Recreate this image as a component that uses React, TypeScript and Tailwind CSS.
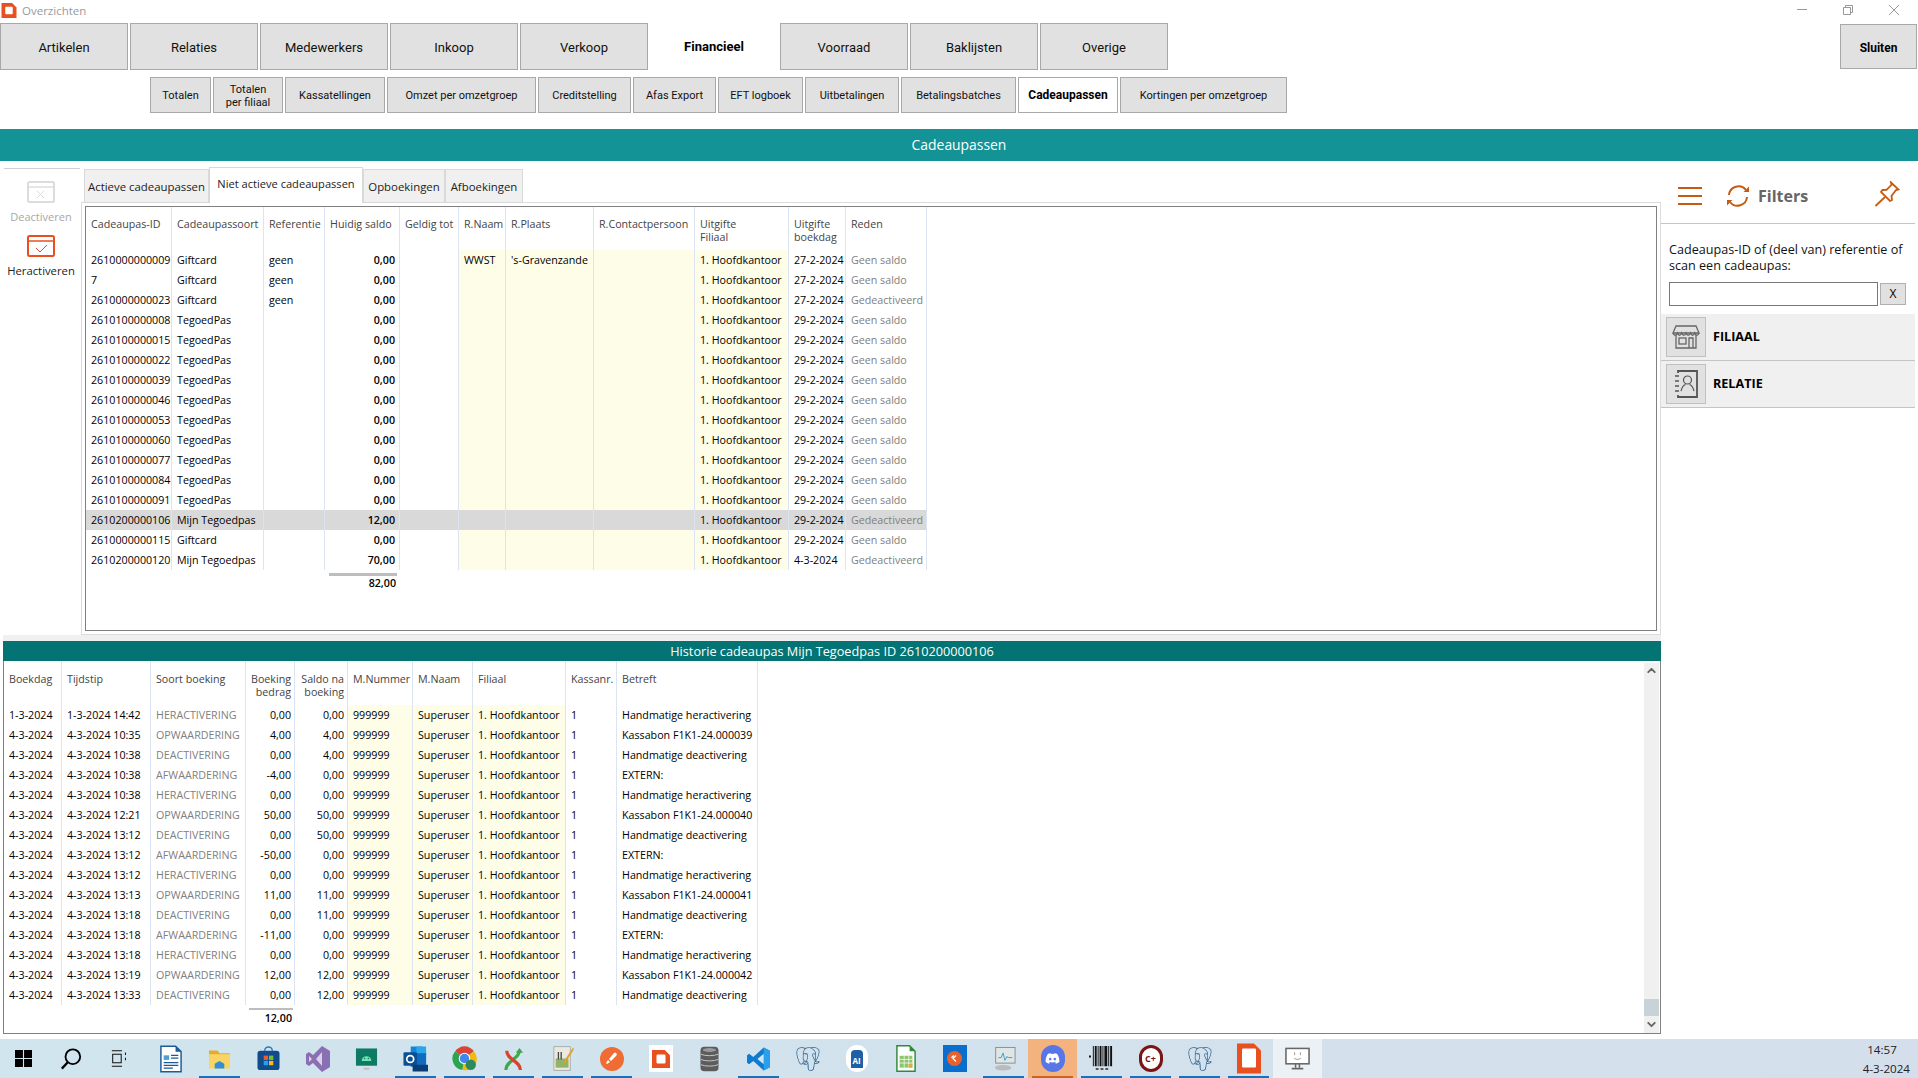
import React from 'react';
import { ChevronDown, ChevronUp } from 'lucide-react';
import { FaDiscord } from 'react-icons/fa';
import { SiPostgresql } from 'react-icons/si';

const mainTabs = ['Artikelen', 'Relaties', 'Medewerkers', 'Inkoop', 'Verkoop', 'Financieel', 'Voorraad', 'Baklijsten', 'Overige'];

const subTabs = [
  { label: 'Totalen', w: 'w-[61px]' },
  { label: 'Totalen per filiaal', w: 'w-[70px]' },
  { label: 'Kassatellingen', w: 'w-[100px]' },
  { label: 'Omzet per omzetgroep', w: 'w-[149px]' },
  { label: 'Creditstelling', w: 'w-[93px]' },
  { label: 'Afas Export', w: 'w-[83px]' },
  { label: 'EFT logboek', w: 'w-[85px]' },
  { label: 'Uitbetalingen', w: 'w-[94px]' },
  { label: 'Betalingsbatches', w: 'w-[115px]' },
  { label: 'Cadeaupassen', w: 'w-[100px]' },
  { label: 'Kortingen per omzetgroep', w: 'w-[167px]' },
];

const passColumns = [
  { w: 'w-[86px]', label: 'Cadeaupas-ID' },
  { w: 'w-[92px]', label: 'Cadeaupassoort' },
  { w: 'w-[61px]', label: 'Referentie' },
  { w: 'w-[75px]', label: 'Huidig saldo' },
  { w: 'w-[59px]', label: 'Geldig tot' },
  { w: 'w-[47px]', label: 'R.Naam' },
  { w: 'w-[88px]', label: 'R.Plaats' },
  { w: 'w-[101px]', label: 'R.Contactpersoon' },
  { w: 'w-[94px]', label: 'Uitgifte\nFiliaal' },
  { w: 'w-[57px]', label: 'Uitgifte\nboekdag' },
  { w: 'w-[81px]', label: 'Reden' },
];

const passes = [
  ['2610000000009', 'Giftcard', 'geen', '0,00', 'WWST', "'s-Gravenzande", '27-2-2024', 'Geen saldo'],
  ['7', 'Giftcard', 'geen', '0,00', '', '', '27-2-2024', 'Geen saldo'],
  ['2610000000023', 'Giftcard', 'geen', '0,00', '', '', '27-2-2024', 'Gedeactiveerd'],
  ['2610100000008', 'TegoedPas', '', '0,00', '', '', '29-2-2024', 'Geen saldo'],
  ['2610100000015', 'TegoedPas', '', '0,00', '', '', '29-2-2024', 'Geen saldo'],
  ['2610100000022', 'TegoedPas', '', '0,00', '', '', '29-2-2024', 'Geen saldo'],
  ['2610100000039', 'TegoedPas', '', '0,00', '', '', '29-2-2024', 'Geen saldo'],
  ['2610100000046', 'TegoedPas', '', '0,00', '', '', '29-2-2024', 'Geen saldo'],
  ['2610100000053', 'TegoedPas', '', '0,00', '', '', '29-2-2024', 'Geen saldo'],
  ['2610100000060', 'TegoedPas', '', '0,00', '', '', '29-2-2024', 'Geen saldo'],
  ['2610100000077', 'TegoedPas', '', '0,00', '', '', '29-2-2024', 'Geen saldo'],
  ['2610100000084', 'TegoedPas', '', '0,00', '', '', '29-2-2024', 'Geen saldo'],
  ['2610100000091', 'TegoedPas', '', '0,00', '', '', '29-2-2024', 'Geen saldo'],
  ['2610200000106', 'Mijn Tegoedpas', '', '12,00', '', '', '29-2-2024', 'Gedeactiveerd'],
  ['2610000000115', 'Giftcard', '', '0,00', '', '', '29-2-2024', 'Geen saldo'],
  ['2610200000120', 'Mijn Tegoedpas', '', '70,00', '', '', '4-3-2024', 'Gedeactiveerd'],
];

const historyColumns = [
  { w: 'w-[58px]', label: 'Boekdag' },
  { w: 'w-[89px]', label: 'Tijdstip' },
  { w: 'w-[95px]', label: 'Soort boeking' },
  { w: 'w-[49px]', label: 'Boeking\nbedrag', right: true },
  { w: 'w-[53px]', label: 'Saldo na\nboeking', right: true },
  { w: 'w-[65px]', label: 'M.Nummer' },
  { w: 'w-[60px]', label: 'M.Naam' },
  { w: 'w-[93px]', label: 'Filiaal' },
  { w: 'w-[51px]', label: 'Kassanr.' },
  { w: 'w-[141px]', label: 'Betreft' },
];

const history = [
  ['1-3-2024', '1-3-2024 14:42', 'HERACTIVERING', '0,00', '0,00', 'Handmatige heractivering'],
  ['4-3-2024', '4-3-2024 10:35', 'OPWAARDERING', '4,00', '4,00', 'Kassabon F1K1-24.000039'],
  ['4-3-2024', '4-3-2024 10:38', 'DEACTIVERING', '0,00', '4,00', 'Handmatige deactivering'],
  ['4-3-2024', '4-3-2024 10:38', 'AFWAARDERING', '-4,00', '0,00', 'EXTERN:'],
  ['4-3-2024', '4-3-2024 10:38', 'HERACTIVERING', '0,00', '0,00', 'Handmatige heractivering'],
  ['4-3-2024', '4-3-2024 12:21', 'OPWAARDERING', '50,00', '50,00', 'Kassabon F1K1-24.000040'],
  ['4-3-2024', '4-3-2024 13:12', 'DEACTIVERING', '0,00', '50,00', 'Handmatige deactivering'],
  ['4-3-2024', '4-3-2024 13:12', 'AFWAARDERING', '-50,00', '0,00', 'EXTERN:'],
  ['4-3-2024', '4-3-2024 13:12', 'HERACTIVERING', '0,00', '0,00', 'Handmatige heractivering'],
  ['4-3-2024', '4-3-2024 13:13', 'OPWAARDERING', '11,00', '11,00', 'Kassabon F1K1-24.000041'],
  ['4-3-2024', '4-3-2024 13:18', 'DEACTIVERING', '0,00', '11,00', 'Handmatige deactivering'],
  ['4-3-2024', '4-3-2024 13:18', 'AFWAARDERING', '-11,00', '0,00', 'EXTERN:'],
  ['4-3-2024', '4-3-2024 13:18', 'HERACTIVERING', '0,00', '0,00', 'Handmatige heractivering'],
  ['4-3-2024', '4-3-2024 13:19', 'OPWAARDERING', '12,00', '12,00', 'Kassabon F1K1-24.000042'],
  ['4-3-2024', '4-3-2024 13:33', 'DEACTIVERING', '0,00', '12,00', 'Handmatige deactivering'],
];

const cell = 'border-r border-[#dbe4f0] pl-[5px] whitespace-nowrap';
const yellow = 'bg-[#fefde8]';

const LogoMark = ({ className }: { className: string }) => (
  <svg viewBox="0 0 24 24" className={className}>
    <path d="M0 0h17l7 7v17H0z" fill="#e8501f" />
    <rect x="6" y="6" width="12" height="12" rx="1.5" fill="#fff" />
  </svg>
);

const PassTable = () => (
  <table className="table-fixed border-separate border-spacing-0 w-[841px] text-[10.7px] leading-[13px]">
    <colgroup>
      {passColumns.map((c) => (
        <col key={c.label} className={c.w} />
      ))}
    </colgroup>
    <thead>
      <tr className="h-[43px]">
        {passColumns.map((c) => (
          <th key={c.label} className={`${cell} align-top pt-[11px] font-normal text-left text-[#444] whitespace-pre-line`}>
            {c.label}
          </th>
        ))}
      </tr>
    </thead>
    <tbody>
      {passes.map((p) => {
        const selected = p[0] === '2610200000106';
        const tint = selected ? '' : yellow;
        return (
          <tr key={p[0]} className={`h-5 text-black ${selected ? 'bg-[#d9d9d9]' : ''}`}>
            <td className={cell}>{p[0]}</td>
            <td className={cell}>{p[1]}</td>
            <td className={cell}>{p[2]}</td>
            <td className={`${cell} text-right font-semibold pr-1`}>{p[3]}</td>
            <td className={cell}></td>
            <td className={`${cell} ${tint}`}>{p[4]}</td>
            <td className={`${cell} ${tint}`}>{p[5]}</td>
            <td className={`${cell} ${tint}`}></td>
            <td className={`${cell} ${tint}`}>1. Hoofdkantoor</td>
            <td className={cell}>{p[6]}</td>
            <td className={`${cell} text-[#808080]`}>{p[7]}</td>
          </tr>
        );
      })}
      <tr>
        <td colSpan={3}></td>
        <td className="pt-[3px]">
          <div className="h-[3px] ml-1 mr-[3px] bg-[#bdbdbd]" />
          <div className="text-right pr-1 font-semibold leading-[14px]">82,00</div>
        </td>
      </tr>
    </tbody>
  </table>
);

const HistoryTable = () => (
  <table className="table-fixed border-separate border-spacing-0 w-[754px] text-[10.7px] leading-[13px]">
    <colgroup>
      {historyColumns.map((c) => (
        <col key={c.label} className={c.w} />
      ))}
    </colgroup>
    <thead>
      <tr className="h-[44px]">
        {historyColumns.map((c) => (
          <th
            key={c.label}
            className={`${cell} align-top pt-[12px] font-normal text-[#444] whitespace-pre-line ${c.right ? 'text-right pr-[3px]' : 'text-left'}`}
          >
            {c.label}
          </th>
        ))}
      </tr>
    </thead>
    <tbody>
      {history.map((h, i) => (
        <tr key={i} className="h-5 text-black">
          <td className={cell}>{h[0]}</td>
          <td className={cell}>{h[1]}</td>
          <td className={`${cell} text-[#808080]`}>{h[2]}</td>
          <td className={`${cell} text-right pr-[3px]`}>{h[3]}</td>
          <td className={`${cell} text-right pr-[3px]`}>{h[4]}</td>
          <td className={`${cell} ${yellow}`}>999999</td>
          <td className={`${cell} ${yellow}`}>Superuser</td>
          <td className={`${cell} ${yellow}`}>1. Hoofdkantoor</td>
          <td className={cell}>1</td>
          <td className={cell}>{h[5]}</td>
        </tr>
      ))}
      <tr>
        <td colSpan={3}></td>
        <td className="pt-[3px]">
          <div className="h-[2px] ml-[3px] mr-[2px] bg-[#bdbdbd]" />
          <div className="text-right pr-[3px] pt-[1px] font-semibold leading-[14px]">12,00</div>
        </td>
      </tr>
    </tbody>
  </table>
);

const Toolbar = () => (
  <div className="w-[81px] pl-1 pt-[7px] shrink-0">
    <div className="border-t border-[#d0d0d0] w-[76px] flex flex-col items-center text-[11px] leading-4 pr-[2px]">
      <svg viewBox="0 0 28 22" className="w-7 h-[22px] mt-[12px]" fill="none" stroke="#dcdcdc">
        <rect x="1" y="1" width="26" height="20" rx="1.5" strokeWidth="2" />
        <path d="M1 6h26" strokeWidth="1.5" />
        <path d="M10 10l7 7M17 10l-7 7" strokeWidth="1" />
      </svg>
      <div className="text-[#a8a8a8] mt-[6px]">Deactiveren</div>
      <svg viewBox="0 0 28 22" className="w-7 h-[22px] mt-[10px]" fill="none" stroke="#e8501f">
        <rect x="1" y="1" width="26" height="20" rx="1.5" strokeWidth="2" />
        <path d="M1 6h26" strokeWidth="1.5" />
        <path d="M9 13l4 4 7-7" strokeWidth="1" />
      </svg>
      <div className="text-[#222] mt-[6px] text-[11.3px]">Heractiveren</div>
    </div>
  </div>
);

const FilterPanel = () => (
  <div className="w-[257px] shrink-0 text-[12.6px]">
    <div className="h-[63px] pt-[7px] flex items-center border-b border-[#c4c4c4] mr-[3px] pl-[17px]">
      <svg viewBox="0 0 24 20" className="w-6 h-5 mr-6" fill="none" stroke="#c85a10" strokeWidth="2">
        <path d="M0 2h24M0 10h24M0 18h24" />
      </svg>
      <svg viewBox="0 0 24 24" className="w-6 h-6 mr-2" fill="none" stroke="#c85a10" strokeWidth="2">
        <path d="M3 11a9.500 9.500 0 0 1 17-5" />
        <path d="M21 13a9.500 9.500 0 0 1-17 5" />
        <path d="M23 2.500v5.500h-5.500z" fill="#c85a10" stroke="none" />
        <path d="M1 21.500v-5.500h5.500z" fill="#c85a10" stroke="none" />
      </svg>
      <span className="text-[16px] font-bold text-[#666]">Filters</span>
      <svg viewBox="0 0 26 26" className="w-[26px] h-[26px] ml-auto mr-[15px] -mt-[3px]" fill="none" stroke="#c85a10" strokeWidth="1.8">
        <path d="M17 1.500l7.500 7-2.500.5-4.500 6 .5 4-2 1-9-9 1.500-2 4-.2 5-5z" />
        <path d="M11 16L1.500 25" />
      </svg>
    </div>
    <div className="pl-2 pt-[18px] leading-4 text-[#111]">Cadeaupas-ID of (deel van) referentie of scan een cadeaupas:</div>
    <div className="flex items-center pl-2 mt-[8px] gap-[2px]">
      <input className="w-[209px] h-[24px] border border-[#777] bg-white" />
      <div className="w-[26px] h-[22px] bg-[#e1e1e1] border border-[#b0b0b0] flex items-center justify-center text-[12px]">X</div>
    </div>
    <div className="mt-[8px] mr-[3px]">
      <div className="h-[47px] bg-[#f0f0f0] border-b border-[#c4c4c4] flex items-center pl-[5px] gap-[7px] font-bold text-black">
        <div className="w-10 h-10 bg-[#e1e1e1] border border-[#c0c0c0] flex items-center justify-center">
          <svg viewBox="0 0 28 24" className="w-7 h-6" fill="none" stroke="#666" strokeWidth="1.3">
            <path d="M4 1h20l3 7H1z" />
            <path d="M1 8c1 3 3 3 4.300 0 1 3 3 3 4.400 0 1 3 3 3 4.300 0 1 3 3 3 4.400 0 1 3 3 3 4.300 0 1 3 3 3 4.300 0" />
            <path d="M4 10v13h20V10" />
            <rect x="7" y="13" width="7" height="6" />
            <path d="M17 23V13h4v10" />
          </svg>
        </div>
        FILIAAL
      </div>
      <div className="h-[47px] bg-[#f0f0f0] border-b border-[#c4c4c4] flex items-center pl-[5px] gap-[7px] font-bold text-black">
        <div className="w-10 h-10 bg-[#e1e1e1] border border-[#c0c0c0] flex items-center justify-center">
          <svg viewBox="0 0 24 28" className="w-6 h-7" fill="none" stroke="#555" strokeWidth="1.8">
            <path d="M4 3V1h19v26H4v-2" />
            <path d="M1 6h4M1 11h4M1 16h4M1 21h4" strokeWidth="1.5" />
            <circle cx="13.500" cy="10" r="4" strokeWidth="1.2" />
            <path d="M7 21c1-4 3-6 4.500-6.500M20 21c-1-4-3-6-4.500-6.500" strokeWidth="1.2" />
          </svg>
        </div>
        RELATIE
      </div>
    </div>
  </div>
);

const TaskItem = ({
  children,
  active,
  width = 'w-[49px]',
  bg = '',
  line = 'bg-[#1573bd]',
}: {
  children?: React.ReactNode;
  active?: boolean;
  width?: string;
  bg?: string;
  line?: string;
}) => (
  <div className={`relative h-full shrink-0 flex items-center justify-center ${width} ${bg}`}>
    {children}
    {active && <div className={`absolute bottom-0 left-1 right-1 h-[2px] ${line}`} />}
  </div>
);

const Taskbar = () => (
  <div className="h-[39px] shrink-0 bg-linear-to-r from-[#d0e5ee] to-[#d5dfec] flex items-stretch relative">
    <TaskItem width="w-[47px]">
      <svg viewBox="0 0 18 18" className="w-[17px] h-[17px]" fill="#000">
        <path d="M0 0h8.400v8.400H0zM9.600 0H18v8.400H9.600zM0 9.600h8.400V18H0zM9.600 9.600H18V18H9.600z" />
      </svg>
    </TaskItem>
    <TaskItem width="w-[48px]">
      <svg viewBox="0 0 24 24" className="w-[22px] h-[22px]" fill="none" stroke="#000" strokeWidth="2">
        <circle cx="14" cy="9.500" r="8" />
        <path d="M8.500 15.500L2 22.500" strokeWidth="2.500" />
      </svg>
    </TaskItem>
    <TaskItem width="w-[48px]">
      <svg viewBox="0 0 20 20" className="w-[17px] h-[19px]" fill="none" stroke="#111" strokeWidth="1.2">
        <path d="M1 1h12M1 19h12M2 5h10v10H2zM17 3v3M17 9v3" />
      </svg>
    </TaskItem>
    <div className="w-[3px] shrink-0" />
    <TaskItem>
      <svg viewBox="0 0 24 30" className="w-[22px] h-[28px]">
        <path d="M1 1h16l6 6v22H1z" fill="#fff" stroke="#1d5a99" strokeWidth="1.6" />
        <path d="M17 1v6h6z" fill="#1d5a99" />
        <path d="M4 11h6v5H4z" fill="#4f9fd0" />
        <path d="M12 11h8M12 14h8M4 19h16M4 22h16M4 25h10" stroke="#1d5a99" strokeWidth="1.3" />
      </svg>
    </TaskItem>
    <TaskItem active>
      <svg viewBox="0 0 24 22" className="w-[23px] h-[22px]">
        <path d="M1 2h9l2 3h11v4H1z" fill="#e8a92c" />
        <path d="M1 6h22v15H1z" fill="#f8d464" />
        <path d="M7 21v-5l5-3 5 3v5z" fill="#2f8fd8" />
      </svg>
    </TaskItem>
    <TaskItem>
      <svg viewBox="0 0 24 26" className="w-[23px] h-[25px]">
        <path d="M8 5a4 4 0 0 1 8 0" fill="none" stroke="#2878c0" strokeWidth="1.5" />
        <rect x="0.5" y="5" width="23" height="20" rx="3" fill="#124b8c" />
        <rect x="7" y="10" width="4.500" height="4.500" fill="#f05a28" />
        <rect x="12.500" y="10" width="4.500" height="4.500" fill="#7dbb33" />
        <rect x="7" y="15.500" width="4.500" height="4.500" fill="#1fa5e6" />
        <rect x="12.500" y="15.500" width="4.500" height="4.500" fill="#f8b916" />
      </svg>
    </TaskItem>
    <TaskItem>
      <svg viewBox="0 0 24 28" className="w-[24px] h-[28px]">
        <path d="M16 1l8 5v16l-8 5L7 18l-4 3-3-2V9l3-2 4 3z" fill="#8a6fb3" />
        <path d="M16 7v14l-6-7z" fill="#d8d2e6" />
        <path d="M3 11v6l3-3z" fill="#d8d2e6" />
      </svg>
    </TaskItem>
    <TaskItem>
      <svg viewBox="0 0 24 24" className="w-[23px] h-[26px]">
        <rect x="1" y="1" width="22" height="18" fill="#0e7a63" />
        <path d="M9 21h6v2H9z" fill="#bbb" />
        <path d="M5 20h14v1H5z" fill="#ddd" />
        <path d="M7 14a5 5 0 0 1 10 0z" fill="#6ee7b0" />
        <circle cx="10" cy="11.500" r=".8" fill="#0e7a63" />
        <circle cx="14" cy="11.500" r=".8" fill="#0e7a63" />
      </svg>
    </TaskItem>
    <TaskItem active>
      <svg viewBox="0 0 26 28" className="w-[25px] h-[28px]">
        <path d="M8 1h12l4 4v16H8z" fill="#1684d6" />
        <path d="M14 1h10v9H14z" fill="#28a8ea" />
        <path d="M8 8h16v14H8z" fill="#0f6cbd" />
        <rect x="0.5" y="7" width="14" height="14" rx="1" fill="#0a4f94" />
        <circle cx="7.500" cy="14" r="3.600" fill="none" stroke="#fff" strokeWidth="1.8" />
        <rect x="10" y="20" width="16" height="7" fill="#0a3c78" />
      </svg>
    </TaskItem>
    <TaskItem active>
      <svg viewBox="0 0 24 24" className="w-[25px] h-[25px]">
        <path d="M12 12L3 5a11 11 0 0 1 18 0z" fill="#db4437" />
        <path d="M12 12L3 5a11 11 0 0 0 7 18z" fill="#2ea44f" />
        <path d="M12 12l9-7a11 11 0 0 1-11 18z" fill="#f2b90f" />
        <circle cx="12" cy="12" r="5.500" fill="#fff" />
        <circle cx="12" cy="12" r="4.500" fill="#3f86ef" />
        <circle cx="18" cy="18" r="5" fill="#2f8a5b" />
      </svg>
    </TaskItem>
    <TaskItem active>
      <svg viewBox="0 0 22 26" className="w-[20px] h-[24px]" fill="none" strokeWidth="3.500">
        <path d="M2 25C2 15 17 13 17 4" stroke="#3fa84a" />
        <path d="M13 6l4-5 4 5" fill="#3fa84a" stroke="none" />
        <path d="M3 4c0 10 15 11 15 21" stroke="#d9432f" />
      </svg>
    </TaskItem>
    <TaskItem active>
      <svg viewBox="0 0 24 28" className="w-[22px] h-[27px]">
        <path d="M2 1h18v26H2z" fill="#e9e9df" stroke="#999" strokeWidth=".8" />
        <path d="M4 14h14v10H4z" fill="#8fb46a" />
        <path d="M7 7v8M10 7v8" stroke="#444" strokeWidth="1.4" />
        <path d="M23 2L13 17l-1 3 3-2L24 4z" fill="#e0a02a" />
      </svg>
    </TaskItem>
    <TaskItem active>
      <div className="w-6 h-6 rounded-full bg-[#ef6c35] flex items-center justify-center">
        <svg viewBox="0 0 16 16" className="w-4 h-4" fill="#fff">
          <path d="M12 2c1 1 1 2 0 3L7 10 5 8l5-6c1-.7 1.500-.7 2 0zM4 9l2 2-3 2-1-1z" />
        </svg>
      </div>
    </TaskItem>
    <TaskItem>
      <div className="w-6 h-[27px] bg-white flex items-center justify-center">
        <LogoMark className="w-[18px] h-[18px]" />
      </div>
    </TaskItem>
    <TaskItem>
      <svg viewBox="0 0 20 28" className="w-[19px] h-[28px]">
        <rect x="0.5" y="1" width="19" height="26" rx="4" fill="#5c5c5c" />
        <path d="M1 9c4 2 14 2 18 0M1 14.500c4 2 14 2 18 0M1 20c4 2 14 2 18 0" fill="none" stroke="#c8c8c8" strokeWidth="1" />
        <ellipse cx="10" cy="4.500" rx="7" ry="2" fill="#9a9a9a" />
      </svg>
    </TaskItem>
    <TaskItem active>
      <svg viewBox="0 0 24 24" className="w-[25px] h-[30px]">
        <path d="M17 1l6 3v16l-6 3L7 14l-4 3-2-1.500V8.500L3 7l4 3z" fill="#0f7bd0" />
        <path d="M17 1l6 3v16l-6 3z" fill="#29a0ec" />
        <path d="M17 7l-6 5 6 5z" fill="#d0e5ee" />
      </svg>
    </TaskItem>
    <TaskItem>
      <SiPostgresql className="w-[24px] h-[26px] text-[#336791]" />
    </TaskItem>
    <TaskItem>
      <div className="w-[22px] h-[27px] rounded-full bg-white flex items-center justify-center">
        <div className="w-[12px] h-[18px] rounded-t-[4px] bg-[#1e5fa8] text-white text-[8px] leading-[22px] font-bold text-center">AI</div>
      </div>
    </TaskItem>
    <TaskItem>
      <svg viewBox="0 0 22 30" className="w-[20px] h-[29px]">
        <path d="M1 1h14l6 6v22H1z" fill="#fff" stroke="#2f8a3c" strokeWidth="1.6" />
        <path d="M15 1v6h6z" fill="#2f8a3c" />
        <path d="M4 12h14v13H4z" fill="#8cc56c" />
        <path d="M4 16h14M4 20h14M9 12v13M14 12v13" stroke="#fff" strokeWidth=".8" />
        <path d="M14 21h4v4h-4z" fill="#e8a92c" />
      </svg>
    </TaskItem>
    <TaskItem>
      <div className="w-6 h-[27px] bg-[#0a6ecf] flex items-center justify-center">
        <div className="w-[15px] h-[15px] rounded-full bg-[#e8622c] flex items-center justify-center">
          <svg viewBox="0 0 12 12" className="w-[9px] h-[9px]" fill="none" stroke="#fff" strokeWidth="1.6">
            <path d="M8 2L4 6l4 4M5 2L2 5" />
          </svg>
        </div>
      </div>
    </TaskItem>
    <TaskItem active>
      <svg viewBox="0 0 26 28" className="w-[24px] h-[27px]">
        <rect x="4" y="2" width="21" height="17" fill="#dfe6e6" stroke="#8a8a8a" />
        <path d="M7 13l3 0 2-5 2 8 2-4 2 1h4" fill="none" stroke="#3a9ac0" strokeWidth="1" />
        <ellipse cx="12" cy="24" rx="9" ry="3" fill="#bbb" />
      </svg>
    </TaskItem>
    <TaskItem active bg="bg-[#f4b27f]" line="bg-[#c8661c]">
      <div className="w-6 h-[27px] rounded-full bg-[#5876e6] flex items-center justify-center">
        <FaDiscord className="w-[15px] h-[15px] text-white" />
      </div>
    </TaskItem>
    <TaskItem active>
      <svg viewBox="0 0 26 28" className="w-[25px] h-[29px]">
        <path d="M0 11h2v2H0zM4 1h1v21H4zM6 1h2v21H6zM9 1h1v21H9zM11 1h2v21h-2zM14 1h1v21h-1zM16 1h3v21h-3zM20 1h1v21h-1zM22 1h2v21h-2z" fill="#111" />
        <path d="M7 24h3v2H7zM12 24h3v2h-3zM17 24h3v2h-3z" fill="#555" />
      </svg>
    </TaskItem>
    <TaskItem active>
      <div className="w-6 h-[27px] rounded-full border-[3px] border-[#7c1414] bg-white flex items-center justify-center text-[9px] font-bold text-[#7c1414] leading-none whitespace-nowrap">C+</div>
    </TaskItem>
    <TaskItem active>
      <SiPostgresql className="w-[24px] h-[26px] text-[#336791]" />
    </TaskItem>
    <TaskItem active>
      <svg viewBox="0 0 24 30" className="w-[24px] h-[31px]">
        <path d="M0 0h17l7 7v23H0z" fill="#e8501f" />
        <rect x="5" y="5" width="14" height="19" rx="1" fill="#fff" />
      </svg>
    </TaskItem>
    <TaskItem bg="bg-[#ecf1f5]">
      <svg viewBox="0 0 26 24" className="w-[25px] h-[24px]" fill="none">
        <rect x="1" y="1" width="24" height="16" fill="#fff" stroke="#666" strokeWidth="1.6" />
        <path d="M10 5v3M16 5v3M9.500 11c2 2 5 2 7 0" stroke="#888" strokeWidth=".9" />
        <path d="M11 17v4M15 17v4" stroke="#666" strokeWidth="1.6" />
        <path d="M7 22h12" stroke="#666" strokeWidth="1.8" />
      </svg>
    </TaskItem>
    <div className="ml-auto w-[70px] pr-[8px] text-right text-[11.6px] text-[#222] flex flex-col justify-center leading-[19px]">
      <span className="text-center pl-[6px]">14:57</span>
      <span>4-3-2024</span>
    </div>
  </div>
);

export default function App() {
  return (
    <div className="w-[1918px] h-[1078px] bg-white flex flex-col overflow-hidden font-['Open_Sans',sans-serif] text-[12px]">
      <div className="h-[23px] shrink-0 flex items-center relative pb-[2px]">
        <LogoMark className="w-4 h-[15px] ml-[1px] mr-[5px]" />
        <span className="text-[11.5px] text-[#9a9a9a]">Overzichten</span>
        <div className="ml-auto flex items-center h-full mr-[19px] gap-[36px] pb-[2px]">
          <div className="w-[10px] h-px bg-[#999]" />
          <svg viewBox="0 0 10 10" className="w-[10px] h-[10px]" fill="none" stroke="#999">
            <path d="M.5 2.500h7v7h-7zM2.500 2.500v-2h7v7h-2" />
          </svg>
          <svg viewBox="0 0 10 10" className="w-[10px] h-[10px]" fill="none" stroke="#999">
            <path d="M0 0l10 10M10 0L0 10" />
          </svg>
        </div>
      </div>

      <div className="h-[47px] shrink-0 flex gap-[2px] font-['Roboto',sans-serif]">
        {mainTabs.map((t) =>
          t === 'Financieel' ? (
            <div key={t} className="w-[128px] flex items-center justify-center font-bold text-[13px] text-black">
              {t}
            </div>
          ) : (
            <div key={t} className="w-[128px] pt-[2px] bg-[#e1e1e1] border border-[#a8a8a8] flex items-center justify-center text-[13px] text-[#111]">
              {t}
            </div>
          ),
        )}
        <div className="ml-auto mr-[1px] mt-[1px] w-[77px] h-[45px] pt-[2px] bg-[#e1e1e1] border border-[#a8a8a8] flex items-center justify-center font-bold text-[12px] text-black">
          Sluiten
        </div>
      </div>

      <div className="h-[36px] mt-[7px] shrink-0 flex gap-[2px] pl-[150px] font-['Roboto',sans-serif]">
        {subTabs.map((t) => (
          <div
            key={t.label}
            className={`${t.w} px-2 pt-[1px] border border-[#a8a8a8] flex items-center justify-center text-center leading-[13px] ${t.label === 'Cadeaupassen' ? 'bg-white font-bold text-[12px] text-black' : 'bg-[#e1e1e1] text-[11px] text-[#111]'}`}
          >
            {t.label}
          </div>
        ))}
      </div>

      <div className="h-8 mt-[16px] pt-[1px] shrink-0 bg-[#139396] text-white text-[13.9px] flex items-center justify-center">Cadeaupassen</div>

      <div className="flex-1 flex min-h-0">
        <div className="w-[1661px] shrink-0 flex flex-col">
          <div className="h-[474px] flex">
            <Toolbar />
            <div className="flex-1 pt-[6px] flex flex-col min-w-0">
              <div className="flex h-[36px] pl-[3px] text-[11.4px] text-[#222] items-end relative z-10 whitespace-nowrap">
                <div className="w-[125px] h-[34px] pt-[2px] bg-[#f0f0f0] border border-[#d9d9d9] flex items-center justify-center">Actieve cadeaupassen</div>
                <div className="w-[154px] h-[36px] pb-[2px] bg-white border border-b-0 border-[#d9d9d9] flex items-center justify-center text-[11.1px]">Niet actieve cadeaupassen</div>
                <div className="w-[82px] h-[34px] pt-[2px] bg-[#f0f0f0] border border-[#d9d9d9] flex items-center justify-center">Opboekingen</div>
                <div className="w-[78px] h-[34px] pt-[2px] bg-[#f0f0f0] border border-[#d9d9d9] flex items-center justify-center">Afboekingen</div>
              </div>
              <div className="h-[433px] -mt-px border border-[#dcdcdc] p-[3px]">
                <div className="h-full border border-[#808080]">
                  <PassTable />
                </div>
              </div>
            </div>
          </div>
          <div className="h-[6px] shrink-0 bg-[#f0f0f0] ml-[3px]" />
          <div className="h-5 pt-[1px] shrink-0 ml-[3px] bg-[#047374] text-white text-[12.7px] flex items-center justify-center">
            Historie cadeaupas Mijn Tegoedpas ID 2610200000106
          </div>
          <div className="h-[373px] shrink-0 ml-[3px] border-x border-b border-[#808080] flex">
            <div className="flex-1 min-w-0">
              <HistoryTable />
            </div>
            <div className="w-[15px] mr-[1px] mt-[2px] bg-[#f0f0f0] flex flex-col items-center text-[#666]">
              <ChevronUp className="w-[13px] h-[13px] mt-[1px]" strokeWidth={3.5} />
              <div className="mt-auto w-full h-[17px] bg-[#c9d2d6]" />
              <ChevronDown className="w-[13px] h-[13px] my-[2px]" strokeWidth={3.5} />
            </div>
          </div>
        </div>
        <FilterPanel />
      </div>

      <Taskbar />
    </div>
  );
}
